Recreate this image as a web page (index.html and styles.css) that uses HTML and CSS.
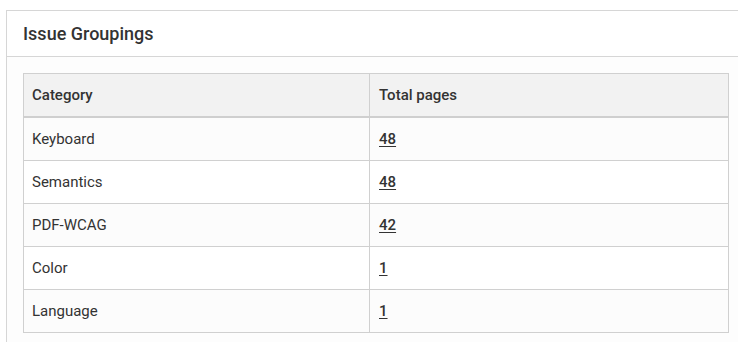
FILE: index.html
```html
<!DOCTYPE html>
<html>
<head>
<meta charset="utf-8">
<link rel="stylesheet" href="styles.css">
</head>
<body>
<section class="card">
  <header class="card-header"><h2 class="card-title">Issue Groupings</h2></header>
  <div class="card-body">
    <table class="grid">
      <thead>
        <tr><th class="col-cat">Category</th><th class="col-num">Total pages</th></tr>
      </thead>
      <tbody>
        <tr><td>Keyboard</td><td class="col-num"><a class="count" href="#">48</a></td></tr>
        <tr><td>Semantics</td><td class="col-num"><a class="count" href="#">48</a></td></tr>
        <tr><td>PDF-WCAG</td><td class="col-num"><a class="count" href="#">42</a></td></tr>
        <tr><td>Color</td><td class="col-num"><a class="count" href="#">1</a></td></tr>
        <tr><td>Language</td><td class="col-num"><a class="count" href="#">1</a></td></tr>
      </tbody>
    </table>
  </div>
</section>
</body>
</html>
```
FILE: styles.css
```css
html, body {
  margin: 0;
  padding: 0;
  background: #ffffff;
  font-family: Roboto, "Liberation Sans", Arial, sans-serif;
  color: #333333;
  overflow: hidden;
}
.card {
  margin: 10px -20px 0 6px;
  border: 1px solid #d6d6d6;
  border-bottom: none;
  background: #fdfdfd;
  min-height: 340px;
}
.card-header {
  height: 45px;
  display: flex;
  align-items: center;
  padding-left: 16px;
  border-bottom: 1px solid #d6d6d6;
  background: #ffffff;
}
.card-title {
  margin: 0;
  font-size: 18px;
  font-weight: 500;
  color: #333333;
}
.card-body {
  padding: 16px 0 0 16px;
}
.grid {
  border-collapse: collapse;
  width: 706px;
  font-size: 15px;
  background: #ffffff;
}
.grid th, .grid td {
  border: 1px solid #d0d0d0;
  text-align: left;
  padding: 0 8px;
  height: 42px;
}
.grid .col-num {
  padding-left: 9px;
}
.grid th {
  background: #f2f2f2;
  font-weight: 500;
  color: #333333;
  border-bottom: 2px solid #cfcfcf;
}
.grid .col-cat {
  width: 329px;
}
.grid tbody tr:nth-child(odd) td {
  background: #fcfcfc;
}
.count {
  color: #333333;
  font-weight: 500;
  text-decoration: underline;
  text-underline-offset: 2px;
}
```
